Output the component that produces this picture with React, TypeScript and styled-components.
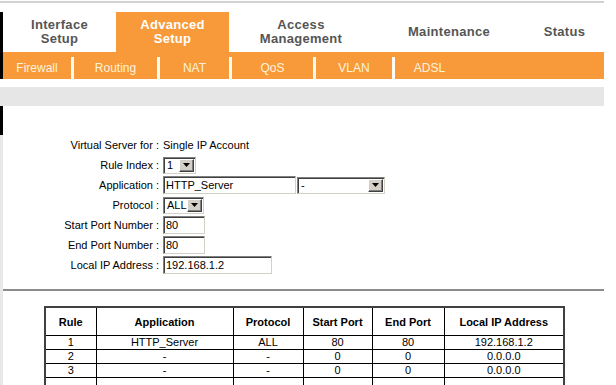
import React from "react";
import styled, { createGlobalStyle } from "styled-components";

const ORANGE = "#f89a3a";

const GlobalStyle = createGlobalStyle`
  body {
    margin: 0;
    background: #fff;
    font-family: "Liberation Sans", Arial, sans-serif;
  }
`;

const tabs = [
  { label: "Interface\nSetup", width: 113 },
  { label: "Advanced\nSetup", width: 113, active: true },
  { label: "Access\nManagement", width: 144 },
  { label: "Maintenance", width: 152 },
  { label: "Status", width: 79 },
];

const subTabs = [
  { label: "Firewall", width: 68 },
  { label: "Routing", width: 83 },
  { label: "NAT", width: 69 },
  { label: "QoS", width: 81 },
  { label: "VLAN", width: 76 },
  { label: "ADSL", width: 69 },
];

// last row runs past the bottom of the window, only its borders show
const rules = [
  ["1", "HTTP_Server", "ALL", "80", "80", "192.168.1.2"],
  ["2", "-", "-", "0", "0", "0.0.0.0"],
  ["3", "-", "-", "0", "0", "0.0.0.0"],
  ["", "", "", "", "", ""],
];

const Arrow = () => (
  <svg width="7" height="4" viewBox="0 0 7 4">
    <path d="M0 0h7L3.5 4z" fill="#000" />
  </svg>
);

const Select = ({ value, width }: { value: string; width: number }) => (
  <SelectBox $w={width}>
    <SelectText>{value}</SelectText>
    <SelectButton>
      <Arrow />
    </SelectButton>
  </SelectBox>
);

const App = () => {
  return (
    <Frame>
      <GlobalStyle />
      <TopRule />
      <Header>
        <TabRow>
          {tabs.map((t) => (
            <Tab key={t.label} $w={t.width} $active={!!t.active}>
              {t.label}
            </Tab>
          ))}
        </TabRow>
        <SubNav>
          {subTabs.map((s, i) => (
            <React.Fragment key={s.label}>
              {i > 0 && <SubSep />}
              <SubItem $w={s.width}>{s.label}</SubItem>
            </React.Fragment>
          ))}
        </SubNav>
      </Header>
      <Band />
      <Content>
        <Gutter />
        <Main>
          <Form>
            <Label>Virtual Server for :</Label>
            <Value>Single IP Account</Value>

            <Label>Rule Index :</Label>
            <Value>
              <Select value="1" width={33} />
            </Value>

            <Label>Application :</Label>
            <Value>
              <TextBox $w={133} value="HTTP_Server" readOnly />
              <Select value="-" width={88} />
            </Value>

            <Label>Protocol :</Label>
            <Value>
              <Select value="ALL" width={41} />
            </Value>

            <Label>Start Port Number :</Label>
            <Value>
              <TextBox $w={42} value="80" readOnly />
            </Value>

            <Label>End Port Number :</Label>
            <Value>
              <TextBox $w={42} value="80" readOnly />
            </Value>

            <Label>Local IP Address :</Label>
            <Value>
              <TextBox $w={109} value="192.168.1.2" readOnly />
            </Value>
          </Form>
          <Divider />
          <RuleTable>
            <colgroup>
              <col style={{ width: 51 }} />
              <col style={{ width: 137 }} />
              <col style={{ width: 70 }} />
              <col style={{ width: 69 }} />
              <col style={{ width: 72 }} />
              <col style={{ width: 120 }} />
            </colgroup>
            <thead>
              <tr>
                <Th>Rule</Th>
                <Th>Application</Th>
                <Th>Protocol</Th>
                <Th>Start Port</Th>
                <Th>End Port</Th>
                <Th>Local IP Address</Th>
              </tr>
            </thead>
            <tbody>
              {rules.map((r, n) => (
                <tr key={n}>
                  {r.map((c, i) => (
                    <Td key={i}>{c}</Td>
                  ))}
                </tr>
              ))}
            </tbody>
          </RuleTable>
        </Main>
      </Content>
    </Frame>
  );
};

export default App;

const Frame = styled.div`
  width: 604px;
  height: 385px;
  overflow: hidden;
`;

const TopRule = styled.div`
  height: 2px;
  margin: 1px 0 9px;
  background: #d2d2d2;
`;

const Header = styled.div`
  display: flex;
  flex-direction: column;
  border-left: 3px solid #000;
`;

const TabRow = styled.div`
  display: flex;
  height: 40px;
`;

const Tab = styled.div<{ $w: number; $active: boolean }>`
  width: ${({ $w }) => $w}px;
  display: flex;
  align-items: center;
  justify-content: center;
  text-align: center;
  white-space: pre;
  font-size: 13px;
  font-weight: bold;
  line-height: 14px;
  letter-spacing: 0.3px;
  color: ${({ $active }) => ($active ? "#fff" : "#555")};
  background: ${({ $active }) => ($active ? ORANGE : "transparent")};
`;

const SubNav = styled.div`
  display: flex;
  align-items: flex-end;
  height: 27px;
  background: ${ORANGE};
`;

const SubItem = styled.div<{ $w: number }>`
  width: ${({ $w }) => $w}px;
  height: 22px;
  line-height: 22px;
  text-align: center;
  font-size: 12px;
  color: #fff3dc;
`;

const SubSep = styled.div`
  width: 3px;
  height: 22px;
  background: #fffaf2;
`;

const Band = styled.div`
  height: 19px;
  margin-top: 8px;
  background: #e6e6e6;
`;

const Content = styled.div`
  display: flex;
`;

const Gutter = styled.div`
  width: 3px;
  flex-shrink: 0;
  background: linear-gradient(#000 0 29px, #e8e8e8 29px);
`;

const Main = styled.div`
  flex: 1;
  padding-top: 29px;
`;

const Form = styled.div`
  display: grid;
  grid-template-columns: 156px auto;
  grid-auto-rows: 20px;
  column-gap: 4px;
  align-items: center;
  font-size: 11px;
  color: #000;
`;

const Label = styled.div`
  text-align: right;
  white-space: nowrap;
`;

const Value = styled.div`
  display: flex;
  align-items: center;
  gap: 1px;
`;

const TextBox = styled.input<{ $w: number }>`
  width: ${({ $w }) => $w}px;
  height: 18px;
  box-sizing: border-box;
  margin: 0;
  padding: 0 0 0 2px;
  font-family: "Liberation Sans", Arial, sans-serif;
  font-size: 11px;
  color: #000;
  background: #fff;
  border-style: solid;
  border-width: 1px;
  border-color: #808080 #d4d0c8 #d4d0c8 #808080;
  box-shadow: inset 1px 1px 0 #404040;
  outline: none;
`;

const SelectBox = styled.div<{ $w: number }>`
  width: ${({ $w }) => $w}px;
  height: 17px;
  box-sizing: border-box;
  display: flex;
  align-items: stretch;
  background: #fff;
  border-style: solid;
  border-width: 1px;
  border-color: #808080 #d4d0c8 #d4d0c8 #808080;
  box-shadow: inset 1px 1px 0 #404040;
  padding: 1px;
`;

const SelectText = styled.div`
  flex: 1;
  padding-left: 2px;
  line-height: 13px;
  font-size: 11px;
  overflow: hidden;
`;

const SelectButton = styled.div`
  width: 15px;
  box-sizing: border-box;
  display: flex;
  align-items: center;
  justify-content: center;
  background: #d4d0c8;
  border-style: solid;
  border-width: 1px;
  border-color: #fff #404040 #404040 #fff;
  box-shadow: inset -1px -1px 0 #808080;
`;

const Divider = styled.div`
  height: 2px;
  margin-top: 14px;
  background: #8c8c8c;
`;

const RuleTable = styled.table`
  width: 519px;
  margin: 15px 0 0 41px;
  border-collapse: collapse;
  table-layout: fixed;
  border: 2px solid #404040;
  font-size: 11px;
  color: #000;
`;

const Th = styled.th`
  height: 27px;
  padding: 0;
  border: 1px solid #000;
  font-weight: bold;
  text-align: center;
`;

const Td = styled.td`
  height: 13px;
  padding: 0;
  line-height: 13px;
  border: 1px solid #000;
  text-align: center;
`;
